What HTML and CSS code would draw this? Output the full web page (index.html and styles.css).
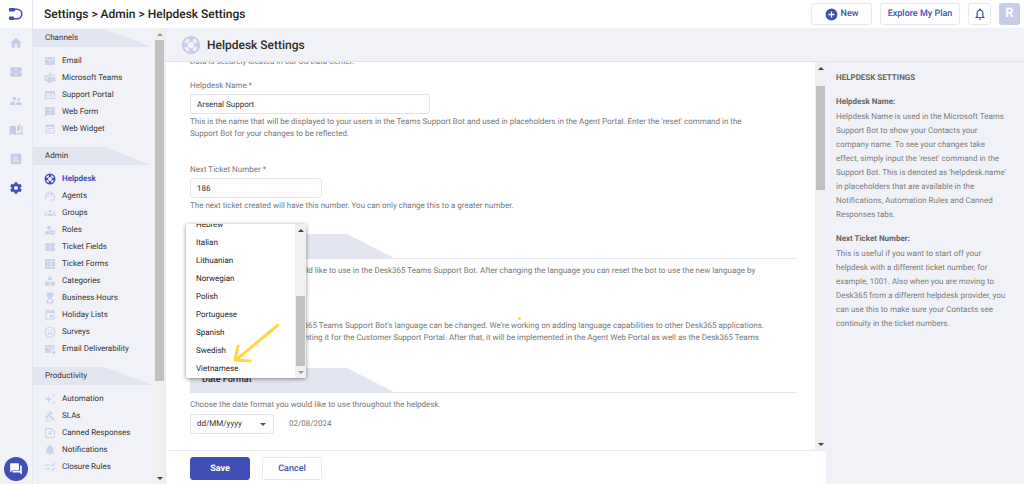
FILE: index.html
```html
<!DOCTYPE html>
<html lang="en">
<head>
<meta charset="utf-8">
<title>Helpdesk Settings</title>
<link rel="stylesheet" href="styles.css">
</head>
<body>
<svg class="sprite" aria-hidden="true">
  <symbol id="home" viewBox="0 0 24 24"><path d="M10 20v-6h4v6h5v-8h3L12 3 2 12h3v8z"/></symbol>
  <symbol id="ticket" viewBox="0 0 24 24"><path d="M20 12c0-1.1.9-2 2-2V6c0-1.1-.9-2-2-2H4c-1.100 0-2 .9-2 2v4c1.100 0 2 .9 2 2s-.9 2-2 2v4c0 1.100.9 2 2 2h16c1.100 0 2-.9 2-2v-4c-1.100 0-2-.9-2-2zm-7 5.500h-2v-2h2v2zm0-4.500h-2v-2h2v2zm0-4.500h-2v-2h2v2z"/></symbol>
  <symbol id="people" viewBox="0 0 24 24"><path d="M16.500 12a2.500 2.500 0 1 0 0-5 2.500 2.500 0 0 0 0 5zM9 11a3 3 0 1 0 0-6 3 3 0 0 0 0 6zm7.500 3c-1.830 0-5.500.920-5.500 2.750V19h11v-2.250C22 14.920 18.330 14 16.500 14zM9 13c-2.330 0-7 1.170-7 3.500V19h7v-2.250c0-.850.330-2.340 2.370-3.470C10.500 13.100 9.660 13 9 13z"/></symbol>
  <symbol id="book" viewBox="0 0 24 24"><path d="M1 6v14.500C2.500 19.500 4.500 19 6.500 19s4 .5 5.500 1.500V6C10.500 5 8.500 4.500 6.500 4.500S2.500 5 1 6zm18-5-5 5v9.500l5-4.500zm2 4v12c-1-.4-2.200-.5-3.500-.5-1.700 0-3.300.4-4.500 1v3c1.200-.9 2.900-1.500 4.500-1.500 1.900 0 4 .5 5.500 1.500V6c-.6-.4-1.300-.7-2-1z"/></symbol>
  <symbol id="chart" viewBox="0 0 24 24"><path d="M19 3H5c-1.100 0-2 .9-2 2v14c0 1.100.9 2 2 2h14c1.100 0 2-.9 2-2V5c0-1.100-.9-2-2-2zM9 17H7v-7h2v7zm4 0h-2V7h2v10zm4 0h-2v-4h2v4z"/></symbol>
  <symbol id="gear" viewBox="0 0 24 24"><path d="M19.430 12.980c.04-.320.070-.640.070-.980s-.030-.660-.070-.980l2.110-1.650a.5.5 0 0 0 .120-.640l-2-3.460a.5.5 0 0 0-.610-.220l-2.490 1a7.300 7.300 0 0 0-1.690-.980l-.380-2.650A.49.49 0 0 0 14 2h-4a.49.49 0 0 0-.490.420l-.380 2.650c-.610.250-1.170.590-1.690.980l-2.490-1a.5.5 0 0 0-.610.220l-2 3.460a.5.5 0 0 0 .120.640l2.110 1.650a8 8 0 0 0 0 1.960l-2.110 1.650a.5.5 0 0 0-.120.640l2 3.460c.120.220.390.300.610.220l2.490-1c.520.400 1.080.730 1.690.980l.380 2.650c.030.240.240.420.490.420h4c.250 0 .460-.180.490-.420l.380-2.650c.610-.250 1.170-.590 1.690-.980l2.490 1c.230.090.490 0 .610-.220l2-3.460a.5.5 0 0 0-.120-.640zM12 15.500a3.500 3.500 0 1 1 0-7 3.500 3.500 0 0 1 0 7z"/></symbol>
  <symbol id="mail" viewBox="0 0 24 24"><path d="M20 4H4c-1.100 0-2 .9-2 2v12c0 1.100.9 2 2 2h16c1.100 0 2-.9 2-2V6c0-1.100-.9-2-2-2zm0 4-8 5-8-5V6l8 5 8-5z"/></symbol>
  <symbol id="teams" viewBox="0 0 24 24"><circle cx="13" cy="5" r="3.200"/><circle cx="20" cy="6.500" r="2.200"/><path d="M18.500 10H23v6a3.500 3.500 0 0 1-4.500 3.300z"/><path fill-rule="evenodd" d="M1 7h9v2.500h7.500V16a6 6 0 0 1-11.600 2H1zm2 2.500v1.700h1.700V16h1.800v-4.800h1.700V9.500z"/></symbol>
  <symbol id="portal" viewBox="0 0 24 24"><path d="M20 4H4c-1.100 0-2 .9-2 2v12c0 1.100.9 2 2 2h16c1.100 0 2-.9 2-2V6c0-1.100-.9-2-2-2zm-6 14H4v-3.500h10zm0-5H4V9.500h10zm6 5h-4.500V9.500H20z"/></symbol>
  <symbol id="form" viewBox="0 0 24 24"><path d="M20 2H4c-1.100 0-2 .9-2 2v18l4-4h14c1.100 0 2-.9 2-2V4c0-1.100-.9-2-2-2zm-7 12h-2v-2h2zm0-4h-2V5h2z"/></symbol>
  <symbol id="widget" viewBox="0 0 24 24"><path d="M19 3H5c-1.100 0-2 .9-2 2v14c0 1.100.9 2 2 2h14c1.100 0 2-.9 2-2V5c0-1.100-.9-2-2-2zm0 16H5V8h14zM17 10H7v2h10zm-4 4H7v2h6z"/></symbol>
  <symbol id="buoy" viewBox="0 0 24 24"><path fill-rule="evenodd" d="M12 1a11 11 0 1 0 0 22 11 11 0 0 0 0-22zm0 7a4 4 0 1 1 0 8 4 4 0 0 1 0-8zM8.800 4l1.400 3.200a5.300 5.300 0 0 0-3 3L4 8.800A9 9 0 0 1 8.800 4zm6.400 0A9 9 0 0 1 20 8.800l-3.200 1.400a5.300 5.300 0 0 0-3-3zM4 15.200l3.200-1.400a5.300 5.300 0 0 0 3 3L8.800 20A9 9 0 0 1 4 15.200zm16 0a9 9 0 0 1-4.800 4.800l-1.400-3.200a5.300 5.300 0 0 0 3-3z"/></symbol>
  <symbol id="agent" viewBox="0 0 24 24"><path d="M21 12.200C21 6.700 16.700 3 12 3c-4.600 0-9 3.600-9 9.300-.6.300-1 1-1 1.700v2c0 1.100.9 2 2 2h1v-6.100a7 7 0 0 1 14 0V19h-8v2h8c1.100 0 2-.9 2-2v-1.200c.6-.3 1-.9 1-1.600v-2.300c0-.8-.4-1.400-1-1.700z"/><circle cx="9" cy="13" r="1.200"/><circle cx="15" cy="13" r="1.200"/><path d="M18 11a6 6 0 0 0-6-5c-3 0-6.300 2.500-6 6.500a8 8 0 0 0 4.800-5.900A8 8 0 0 0 18 11z"/></symbol>
  <symbol id="groups" viewBox="0 0 24 24"><circle cx="12" cy="8.500" r="2.800"/><circle cx="4" cy="11" r="2"/><circle cx="20" cy="11" r="2"/><path d="M6.500 18v-1.600c0-2 2.500-3.400 5.500-3.400s5.500 1.400 5.500 3.400V18zM0 18v-1.500C0 15 1.800 14 4 14l1.200.1c-.5.700-.7 1.400-.7 2.300V18zm24 0v-1.500c0-1.500-1.800-2.500-4-2.500l-1.200.1c.5.700.7 1.400.7 2.300V18z"/></symbol>
  <symbol id="roles" viewBox="0 0 24 24"><circle cx="10" cy="7.500" r="4"/><path d="M11 13.500c-4 0-9 1.500-9 4.500v2.500h9.500a7 7 0 0 1-.5-7z"/><path fill-rule="evenodd" d="m17 11 1.300 1.300 2-.2.600 1.900 1.700 1-.7 2 .7 2-1.700 1-.6 1.900-2-.2L17 23l-1.300-1.300-2 .2-.6-1.900-1.700-1 .7-2-.7-2 1.700-1 .6-1.900 2 .2zm0 4a2 2 0 1 0 0 4 2 2 0 0 0 0-4z"/></symbol>
  <symbol id="forms" viewBox="0 0 24 24"><path fill-rule="evenodd" d="M4 2h16a2 2 0 0 1 2 2v16a2 2 0 0 1-2 2H4a2 2 0 0 1-2-2V4c0-1.100.9-2 2-2zm2 4v2h2V6zm4 0v2h8V6zm-4 5v2h2v-2zm4 0v2h8v-2zm-4 5v2h2v-2zm4 0v2h8v-2z"/></symbol>
  <symbol id="shapes" viewBox="0 0 24 24"><path d="m12 1 5.500 9h-11zM2 13h9v9H2z"/><circle cx="17.500" cy="17.500" r="4.800"/></symbol>
  <symbol id="hourglass" viewBox="0 0 24 24"><path fill-rule="evenodd" d="M5 1h14v7l-4 4 4 4v7H5v-7l4-4-4-4zm7 12.500L8 17v3h8v-3z"/></symbol>
  <symbol id="calendar" viewBox="0 0 24 24"><path d="M17 12h-5v5h5zM16 1v2H8V1H6v2H5a2 2 0 0 0-2 2v14c0 1.100.9 2 2 2h14c1.100 0 2-.9 2-2V5c0-1.100-.9-2-2-2h-1V1zm3 18H5V8h14z"/></symbol>
  <symbol id="smile" viewBox="0 0 24 24"><path fill-rule="evenodd" d="M12 1a11 11 0 1 0 0 22 11 11 0 0 0 0-22zm0 2a9 9 0 1 1 0 18 9 9 0 0 1 0-18z"/><circle cx="8.500" cy="9.500" r="1.600"/><circle cx="15.500" cy="9.500" r="1.600"/><path d="M6.500 13.500h11a5.700 5.700 0 0 1-11 0z"/></symbol>
  <symbol id="mailcheck" viewBox="0 0 24 24"><path d="M20 4H4c-1.100 0-2 .9-2 2v12c0 1.100.9 2 2 2h10a6 6 0 0 1 8-7V6c0-1.100-.9-2-2-2zm0 4-8 5-8-5V6l8 5 8-5z"/><circle cx="19.500" cy="19" r="3.500"/></symbol>
  <symbol id="sparkle" viewBox="0 0 24 24"><path d="m9 4 2 6 6 2-6 2-2 6-2-6-6-2 6-2zM19 1l1 3 3 1-3 1-1 3-1-3-3-1 3-1zM19 15l1 3 3 1-3 1-1 3-1-3-3-1 3-1z"/></symbol>
  <symbol id="gavel" viewBox="0 0 24 24"><path d="M1 21h12v2H1zM5.200 8.100l2.900-2.900 14.100 14.100-2.800 2.900zM12.300 1l5.700 5.700-2.800 2.800-5.700-5.700zM3.800 9.500l5.700 5.700L6.700 18 1 12.300z"/></symbol>
  <symbol id="canned" viewBox="0 0 24 24"><path fill-rule="evenodd" d="M4 2h11l7 7v11a2 2 0 0 1-2 2H4a2 2 0 0 1-2-2V4c0-1.100.9-2 2-2zm0 2v16h16v-9.500L13.500 4z"/><path d="M11 8h2v3.500h3.500v2H13V17h-2v-3.500H7.500v-2H11z"/></symbol>
  <symbol id="bell" viewBox="0 0 24 24"><path d="M12 22c1.100 0 2-.9 2-2h-4c0 1.100.9 2 2 2zm7-6v-5c0-3.500-2-6.200-5.500-7V3a1.500 1.500 0 0 0-3 0v1C7 4.800 5 7.500 5 11v5l-2 2v1h18v-1z"/></symbol>
  <symbol id="bell-line" viewBox="0 0 24 24"><path fill-rule="evenodd" d="M12 22c1.100 0 2-.9 2-2h-4c0 1.100.9 2 2 2zm6-6v-5c0-3.070-1.630-5.640-4.500-6.320V4a1.500 1.500 0 0 0-3 0v.680C7.640 5.360 6 7.920 6 11v5l-2 2v1h16v-1zm-2 1H8v-6c0-2.500 1.500-4.500 4-4.500s4 2 4 4.500z"/></symbol>
  <symbol id="rules" viewBox="0 0 24 24"><path d="M1 7h11v2H1zM1 15h11v2H1zM17.500 11 14 7.500 15.400 6l2.100 2.100L22 3.700l1.400 1.400zM17.500 20 14 16.500l1.400-1.500 2.100 2.100 4.500-4.400 1.400 1.400z"/></symbol>
  <symbol id="chat" viewBox="0 0 24 24"><path d="M3 2h13a1 1 0 0 1 1 1v10a1 1 0 0 1-1 1H6l-4 4V3a1 1 0 0 1 1-1z"/><path d="M19 6h2a1 1 0 0 1 1 1v15l-4-4H7a1 1 0 0 1-1-1v-2h13z"/></symbol>
  <symbol id="plus" viewBox="0 0 24 24"><path fill-rule="evenodd" d="M12 1a11 11 0 1 0 0 22 11 11 0 0 0 0-22zM10.800 6.500h2.400v4.300h4.300v2.400h-4.300v4.300h-2.400v-4.300H6.500v-2.400h4.300z"/></symbol>
</svg>

<div class="app">
  <nav class="rail" aria-label="Main">
    <a class="logo" href="#" aria-label="Desk365">
      <svg viewBox="0 0 14 12"><path class="logo-curve" d="M6 1.200h2a4.800 4.800 0 0 1 0 9.600H4"/><rect x="0" y="0" width="6" height="3.600" rx="1"/><rect x="0" y="8.400" width="5" height="3.600" rx="1"/></svg>
    </a>
    <div class="rail-links">
      <a href="#" aria-label="Home"><svg><use href="#home"/></svg></a>
      <a href="#" aria-label="Tickets"><svg><use href="#ticket"/></svg></a>
      <a href="#" aria-label="Contacts"><svg><use href="#people"/></svg></a>
      <a href="#" aria-label="Knowledge base"><svg><use href="#book"/></svg></a>
      <a href="#" aria-label="Reports"><svg><use href="#chart"/></svg></a>
      <a href="#" class="current" aria-label="Settings"><svg><use href="#gear"/></svg></a>
    </div>
    <button class="chat" type="button" aria-label="Chat"><svg><use href="#chat"/></svg></button>
  </nav>

  <div class="workspace">
    <header class="topbar">
      <h1>Settings &gt; Admin &gt; Helpdesk Settings</h1>
      <button class="btn new" type="button"><svg><use href="#plus"/></svg>New</button>
      <button class="btn explore" type="button">Explore My Plan</button>
      <button class="btn alerts" type="button" aria-label="Notifications"><svg><use href="#bell-line"/></svg></button>
      <button class="avatar" type="button">R</button>
    </header>

    <div class="body">
      <nav class="sidebar" aria-label="Settings">
        <div class="groups">
          <section>
            <h2>Channels</h2>
            <ul>
              <li><a href="#"><svg><use href="#mail"/></svg>Email</a></li>
              <li><a href="#"><svg><use href="#teams"/></svg>Microsoft Teams</a></li>
              <li><a href="#"><svg><use href="#portal"/></svg>Support Portal</a></li>
              <li><a href="#"><svg><use href="#form"/></svg>Web Form</a></li>
              <li><a href="#"><svg><use href="#widget"/></svg>Web Widget</a></li>
            </ul>
          </section>
          <section>
            <h2>Admin</h2>
            <ul>
              <li><a href="#" class="current"><svg><use href="#buoy"/></svg>Helpdesk</a></li>
              <li><a href="#"><svg><use href="#agent"/></svg>Agents</a></li>
              <li><a href="#"><svg><use href="#groups"/></svg>Groups</a></li>
              <li><a href="#"><svg><use href="#roles"/></svg>Roles</a></li>
              <li><a href="#"><svg><use href="#ticket"/></svg>Ticket Fields</a></li>
              <li><a href="#"><svg><use href="#forms"/></svg>Ticket Forms</a></li>
              <li><a href="#"><svg><use href="#shapes"/></svg>Categories</a></li>
              <li><a href="#"><svg><use href="#hourglass"/></svg>Business Hours</a></li>
              <li><a href="#"><svg><use href="#calendar"/></svg>Holiday Lists</a></li>
              <li><a href="#"><svg><use href="#smile"/></svg>Surveys</a></li>
              <li><a href="#"><svg><use href="#mailcheck"/></svg>Email Deliverability</a></li>
            </ul>
          </section>
          <section>
            <h2>Productivity</h2>
            <ul>
              <li><a href="#"><svg><use href="#sparkle"/></svg>Automation</a></li>
              <li><a href="#"><svg><use href="#gavel"/></svg>SLAs</a></li>
              <li><a href="#"><svg><use href="#canned"/></svg>Canned Responses</a></li>
              <li><a href="#"><svg><use href="#bell"/></svg>Notifications</a></li>
              <li><a href="#"><svg><use href="#rules"/></svg>Closure Rules</a></li>
            </ul>
          </section>
        </div>
        <div class="scrollbar side-scroll"><i class="up dim"></i><span class="track"><span class="thumb"></span></span><i class="down"></i></div>
      </nav>

      <main class="page">
        <div class="page-head"><svg><use href="#buoy"/></svg><h2>Helpdesk Settings</h2></div>
        <div class="page-body">
          <div class="form-column">
            <div class="form-scroll">
              <form id="settings" class="form">
                <p class="cut">Data is securely located in our US Data Center.</p>
                <div class="field">
                  <label for="name">Helpdesk Name *</label>
                  <input id="name" class="wide" type="text" value="Arsenal Support">
                  <p>This is the name that will be displayed to your users in the Teams Support Bot and used in placeholders in the Agent Portal. Enter the 'reset' command in the Support Bot for your changes to be reflected.</p>
                </div>
                <div class="field">
                  <label for="number">Next Ticket Number *</label>
                  <input id="number" class="short" type="text" value="186">
                  <p>The next ticket created will have this number. You can only change this to a greater number.</p>
                </div>
                <section class="block language">
                  <h3><span>Language</span></h3>
                  <p>Choose which language you would like to use in the Desk365 Teams Support Bot. After changing the language you can reset the bot to use the new language by</p>
                  <p class="note">Please notice that only the Desk365 Teams Support Bot's language can be changed. We're working on adding language capabilities to other Desk365 applications. We have already begun implementing it for the Customer Support Portal. After that, it will be implemented in the Agent Web Portal as well as the Desk365 Teams</p>
                  <div class="popup">
                    <ul role="listbox" aria-label="Language">
                      <li role="option">Hebrew</li>
                      <li role="option">Italian</li>
                      <li role="option">Lithuanian</li>
                      <li role="option">Norwegian</li>
                      <li role="option">Polish</li>
                      <li role="option">Portuguese</li>
                      <li role="option">Spanish</li>
                      <li role="option">Swedish</li>
                      <li role="option">Vietnamese</li>
                    </ul>
                    <div class="scrollbar popup-scroll"><i class="up"></i><span class="track"><span class="thumb"></span></span><i class="down dim"></i></div>
                    <svg class="arrow" viewBox="0 0 50 44"><path d="M46 4 4 39M6 25 3 39l15 1"/></svg>
                  </div>
                  <span class="dot"></span>
                </section>
                <section class="block">
                  <h3><span>Date Format</span></h3>
                  <label for="format">Choose the date format you would like to use throughout the helpdesk.</label>
                  <div class="format-row">
                    <span class="select"><select id="format"><option>dd/MM/yyyy</option></select></span>
                    <span>02/08/2024</span>
                  </div>
                </section>
              </form>
              <div class="scrollbar page-scroll"><i class="up"></i><span class="track"><span class="thumb"></span></span><i class="down"></i></div>
            </div>
            <footer class="actions">
              <button class="save" type="submit" form="settings">Save</button>
              <button class="cancel" type="button">Cancel</button>
            </footer>
          </div>
          <aside class="help">
            <h2>HELPDESK SETTINGS</h2>
            <h3>Helpdesk Name:</h3>
            <p>Helpdesk Name is used in the Microsoft Teams Support Bot to show your Contacts your company name. To see your changes take effect, simply input the 'reset' command in the Support Bot. This is denoted as 'helpdesk.name' in placeholders that are available in the Notifications, Automation Rules and Canned Responses tabs.</p>
            <h3>Next Ticket Number:</h3>
            <p>This is useful if you want to start off your helpdesk with a different ticket number, for example, 1001. Also when you are moving to Desk365 from a different helpdesk provider, you can use this to make sure your Contacts see continuity in the ticket numbers.</p>
          </aside>
        </div>
      </main>
    </div>
  </div>
</div>
</body>
</html>
```
FILE: styles.css
```css
* { box-sizing: border-box; }

body {
  margin: 0;
  font: 8px/12px Roboto, "Liberation Sans", sans-serif;
  text-rendering: geometricPrecision;
  color: #333;
  background: #fff;
}

h1, h2, h3, p, ul { margin: 0; padding: 0; }
ul { list-style: none; }
a { color: inherit; text-decoration: none; }
button, input, select { font: inherit; color: inherit; text-rendering: inherit; }
svg { fill: currentColor; flex: none; }
.sprite { position: absolute; width: 0; height: 0; }

.app { display: flex; height: 100vh; overflow: hidden; }

/* Icon rail */
.rail {
  flex: none;
  width: 33px;
  display: flex;
  flex-direction: column;
  align-items: center;
  background: #f1f2f8;
  border-right: 1px solid #e4e6f0;
  color: #c5cae6;
}
.logo {
  align-self: stretch;
  height: 28px;
  display: flex;
  align-items: center;
  justify-content: center;
  background: #fff;
  color: #3f4fb5;
}
.logo svg { width: 14px; height: 12px; }
.logo-curve { fill: none; stroke: currentColor; stroke-width: 1.600; }
.rail-links { display: flex; flex-direction: column; gap: 15px; padding-top: 8px; }
.rail-links a { display: flex; }
.rail-links svg { width: 14px; height: 14px; }
.rail-links .current { color: #3f4fb5; }
.chat {
  width: 24px;
  height: 24px;
  margin: auto 0 3px;
  padding: 0;
  display: flex;
  align-items: center;
  justify-content: center;
  border: 0;
  border-radius: 50%;
  background: #3f4fb5;
  color: #fff;
}
.chat svg { width: 14px; height: 14px; }

.workspace { flex: 1; min-width: 0; display: flex; flex-direction: column; }

/* Top bar */
.topbar {
  flex: none;
  height: 28px;
  display: flex;
  align-items: center;
  gap: 8px;
  padding: 0 4px 0 11px;
}
.topbar h1 { flex: 1; font-size: 12px; line-height: 16px; font-weight: 500; color: #222; }
.btn, .avatar, .save, .cancel {
  height: 22px;
  padding: 0;
  display: flex;
  align-items: center;
  justify-content: center;
  border: 1px solid #e8e8ee;
  border-radius: 3px;
  background: #fff;
  color: #3f4fb5;
  font-size: 9px;
  font-weight: 500;
}
.new { width: 61px; gap: 3px; }
.new svg { width: 13px; height: 13px; }
.explore { width: 80px; }
.alerts { width: 23px; }
.alerts svg { width: 14px; height: 14px; }
.avatar { width: 21px; border: 0; background: #c8cce6; color: #fff; font-size: 13px; font-weight: 700; }

.body { flex: 1; min-height: 0; display: flex; }

/* Drawn scrollbars */
.scrollbar { flex: none; display: flex; flex-direction: column; align-items: center; background: #f0f0f0; }
.scrollbar .track { flex: 1; width: 100%; padding: 0 1px; display: flex; flex-direction: column; }
.scrollbar .thumb { background: #c1c1c1; }
.scrollbar i { height: 12px; display: flex; align-items: center; }
.scrollbar i::before { content: ""; border: 3px solid transparent; }
.scrollbar .up::before { border-top: 0; border-bottom-color: #444; }
.scrollbar .down::before { border-bottom: 0; border-top-color: #444; }
.scrollbar .up.dim::before { border-bottom-color: #999; }
.scrollbar .down.dim::before { border-top-color: #999; }

/* Settings menu */
.sidebar { flex: none; width: 133px; display: flex; background: #f1f2f8; border-right: 1px solid #e9ebf3; }
.groups { flex: 1; min-width: 0; display: flex; flex-direction: column; gap: 10px; padding-top: 1px; overflow: hidden; }
.groups h2 {
  height: 18px;
  margin-right: 2px;
  padding-left: 12px;
  background: #e3e6f1;
  clip-path: polygon(0 0, 60% 0, 100% 100%, 0 100%);
  font-size: 8px;
  line-height: 18px;
  font-weight: 400;
}
.groups ul { padding: 5px 0 0 11px; }
.groups li a { height: 17px; display: flex; align-items: center; gap: 6px; white-space: nowrap; }
.groups svg { width: 12px; height: 12px; color: #ced2ea; }
.groups .current, .groups .current svg { color: #3f4fb5; }
.groups .current { font-weight: 700; }
.side-scroll { width: 11px; }
.side-scroll .thumb { flex: none; height: 79%; }

/* Page */
.page { flex: 1; min-width: 0; display: flex; flex-direction: column; }
.page-head {
  flex: none;
  height: 34px;
  display: flex;
  align-items: center;
  gap: 6px;
  padding-left: 15px;
  background: #f1f2f8;
  border-bottom: 1px solid #dfe2f1;
}
.page-head svg { width: 20px; height: 20px; color: #c9cee8; }
.page-head h2 { font-size: 12px; line-height: 16px; font-weight: 500; color: #2b2b2b; }
.page-body { flex: 1; min-height: 0; display: flex; }
.form-column { flex: 1; min-width: 0; display: flex; flex-direction: column; }
.form-scroll { flex: 1; min-height: 0; display: flex; }
.form { flex: 1; min-width: 0; padding: 0 18px 0 24px; overflow: hidden; color: #777; }
.form p { max-width: 580px; }
.page-scroll { width: 11px; }
.page-scroll .thumb { flex: none; height: 104px; margin-top: 12px; }

.form .cut { margin-top: -6px; }
.field { margin-top: 12px; display: flex; flex-direction: column; align-items: flex-start; }
.field + .field { margin-top: 24px; }
.field input {
  height: 20px;
  margin: 2px 0;
  padding: 0 6px;
  border: 1px solid #e3e3e8;
  border-radius: 3px;
  background: #fff;
  color: #333;
}
.field .wide { width: 240px; }
.field .short { width: 132px; }

.block { margin-top: 24px; }
.language { position: relative; margin-top: 22px; }
.block h3 { margin-bottom: 6px; border-bottom: 1px solid #e3e6f1; font-size: 9px; font-weight: 500; color: #333; }
.block h3 span {
  display: block;
  width: 204px;
  padding-left: 12px;
  line-height: 24px;
  background: #e3e6f1;
  clip-path: polygon(0 0, 157px 0, 100% 100%, 0 100%);
}
.note { margin-top: 43px; }
.format-row { margin-top: 3px; display: flex; align-items: center; gap: 15px; }
.select { display: flex; align-items: center; position: relative; }
.select select {
  width: 84px;
  height: 20px;
  padding: 0 6px;
  appearance: none;
  border: 1px solid #e3e3e8;
  border-radius: 3px;
  background: #fff;
  color: #333;
}
.select::after { content: ""; position: absolute; right: 8px; border: 3px solid transparent; border-top-color: #555; border-bottom: 0; }

.popup {
  position: absolute;
  z-index: 1;
  top: -10px;
  left: -4px;
  width: 120px;
  height: 154px;
  display: flex;
  background: #fff;
  border-radius: 2px;
  box-shadow: 0 1px 4px rgba(0, 0, 0, 0.450);
  color: #222;
}
.popup ul { flex: 1; display: flex; flex-direction: column; justify-content: flex-end; overflow: hidden; }
.popup li { flex: none; padding-left: 10px; line-height: 18px; }
.popup-scroll { width: 11px; }
.popup-scroll .track { justify-content: flex-end; }
.popup-scroll .thumb { height: 54%; }
.arrow { position: absolute; left: 46px; top: 97px; width: 50px; height: 44px; }
.arrow path { fill: none; stroke: #ffd740; stroke-width: 3; stroke-linecap: round; stroke-linejoin: round; }
.dot { position: absolute; top: 83px; left: 328px; width: 3px; height: 3px; border-radius: 50%; background: #fdd835; }

.actions { flex: none; display: flex; gap: 12px; padding: 6px 24px 4px; border-top: 1px solid #e9ebf4; }
.save, .cancel { width: 60px; height: 23px; }
.save { background: #3f4fb5; border-color: #3f4fb5; color: #fff; font-weight: 700; }

/* Contextual help */
.help { flex: none; width: 198px; padding: 9px 16px 9px 10px; background: #f1f2f8; color: #7c7c7c; line-height: 14px; }
.help h2, .help h3 { font-size: 8px; line-height: 14px; font-weight: 700; color: #666; }
.help h3 { margin-top: 10px; }
.help p { margin-top: 1px; }
```
